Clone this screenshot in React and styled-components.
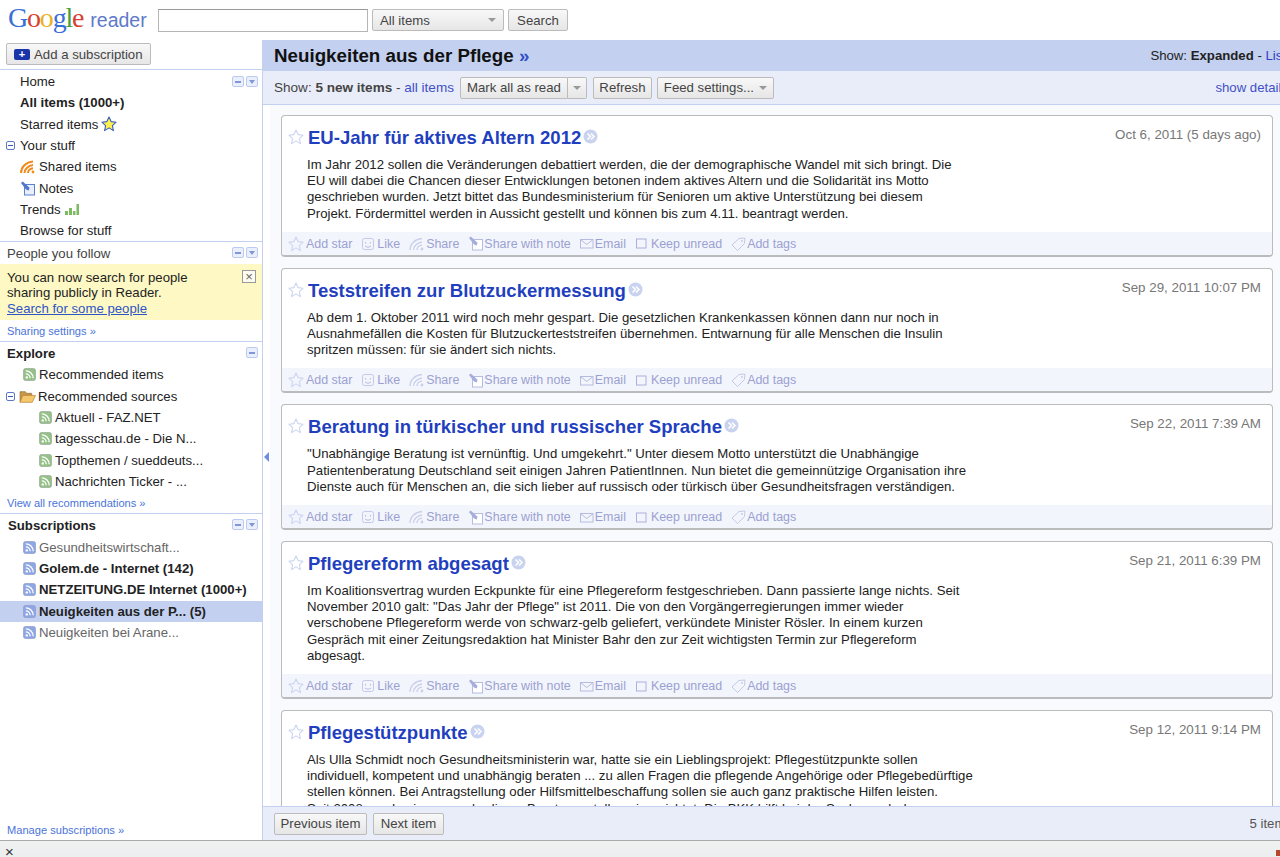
import React from 'react'
import styled, { createGlobalStyle } from 'styled-components'

const GlobalStyle = createGlobalStyle`
  html, body { margin: 0; padding: 0; height: 100%; overflow: hidden; background: #fff; }
  body { font-family: "Liberation Sans", Arial, sans-serif; font-size: 13.2px; color: #222; }
`

const Page = styled.div`
  width: 1280px;
  height: 857px;
  display: flex;
  flex-direction: column;
  overflow: hidden;
`

// top bar
const TopBar = styled.header`
  height: 40px;
  flex: none;
  display: flex;
  align-items: flex-start;
`
const Logo = styled.div`
  width: 150px;
  padding-left: 8px;
  margin-top: 2px;
  display: flex;
  align-items: baseline;
  gap: 7px;
  box-sizing: border-box;
  flex: none;
`
const LogoWord = styled.span`
  font-family: "Liberation Serif", serif;
  font-size: 28px;
  letter-spacing: -1.2px;
`
const LogoLetter = styled.span`
  color: ${p => p.$c};
`
const LogoReader = styled.span`
  font-size: 19.5px;
  color: #5d7ac9;
`
const SearchInput = styled.input`
  width: 210px;
  height: 23px;
  box-sizing: border-box;
  margin: 9px 4px 0 8px;
  border: 1px solid #b5b5b5;
  border-top-color: #999;
  background: #fff;
`
const Btn = styled.button`
  height: ${p => p.$h || 22}px;
  padding: 0 ${p => p.$pad ?? 7}px;
  box-sizing: border-box;
  border: 1px solid #bbb;
  border-radius: 2px;
  background: linear-gradient(#f8f8f8, #e6e6e6);
  color: #444;
  font: 13.2px "Liberation Sans", Arial, sans-serif;
  display: inline-flex;
  align-items: center;
  justify-content: ${p => p.$between ? 'space-between' : 'center'};
  width: ${p => p.$w ? p.$w + 'px' : 'auto'};
  flex: none;
`
const TopBtn = styled(Btn)`
  margin: 9px 4px 0 0;
`
const Caret = styled.span`
  width: 0;
  height: 0;
  border-left: 4px solid transparent;
  border-right: 4px solid transparent;
  border-top: 4px solid #999;
  margin-left: ${p => p.$gap || 0}px;
`

// body split
const Middle = styled.div`
  flex: 1;
  min-height: 0;
  display: flex;
`

// sidebar
const Sidebar = styled.nav`
  width: 263px;
  flex: none;
  box-sizing: border-box;
  border-right: 1px solid #c3d0ef;
  display: flex;
  flex-direction: column;
`
const AddArea = styled.div`
  height: 29px;
  flex: none;
  padding: 3px 0 0 6px;
  box-sizing: border-box;
`
const AddBtn = styled(Btn)`
  gap: 4px;
  width: 145px;
  padding: 0 0 0 7px;
  justify-content: flex-start;
`
const PlusBox = styled.span`
  width: 16px;
  height: 11px;
  background: #1a35a8;
  border-radius: 2px;
  color: #fff;
  font: bold 11px/11px "Liberation Sans", sans-serif;
  text-align: center;
`
const Section = styled.section`
  border-top: 1px solid #c3d0ef;
  flex: none;
`
const NavSection = styled(Section)`
  height: 172px;
  box-sizing: border-box;
  padding-top: 1px;
`
const Row = styled.div`
  height: ${p => p.$h || 21.4}px;
  display: flex;
  align-items: center;
  gap: ${p => p.$gap ?? 3}px;
  padding-left: ${p => p.$left}px;
  padding-right: 4px;
  white-space: nowrap;
  font-weight: ${p => p.$bold ? 'bold' : 'normal'};
  color: ${p => p.$muted ? '#666' : '#222'};
  background: ${p => p.$selected ? '#c3d0f0' : 'transparent'};
`
const SideHeading = styled.div`
  height: ${p => p.$h || 22}px;
  display: flex;
  align-items: center;
  padding: 0 4px 0 ${p => p.$left || 7}px;
  font-weight: ${p => p.$light ? 'normal' : 'bold'};
  color: ${p => p.$light ? '#444' : '#222'};
`
const Tools = styled.span`
  margin-left: auto;
  display: flex;
  gap: 2px;
  align-self: flex-start;
  padding-top: 5px;
`
const Tool = styled.span`
  width: 12px;
  height: 11px;
  box-sizing: border-box;
  border: 1px solid #bccaf0;
  border-radius: 2px;
  background: #e9effc;
  display: flex;
  align-items: center;
  justify-content: center;
`
const ToolDash = styled.span`
  width: 6px;
  height: 2px;
  background: #7f97d8;
`
const ToolArrow = styled.span`
  width: 0;
  height: 0;
  border-left: 3px solid transparent;
  border-right: 3px solid transparent;
  border-top: 4px solid #7f97d8;
`
const Expander = styled.span`
  width: 9px;
  height: 9px;
  box-sizing: border-box;
  border: 1px solid #5c79c4;
  border-radius: 2px;
  margin-right: 2px;
  display: flex;
  align-items: center;
  justify-content: center;
  flex: none;
  &::after {
    content: '';
    width: 5px;
    height: 1px;
    background: #3f5cab;
  }
`
const Notice = styled.div`
  height: 56px;
  box-sizing: border-box;
  background: #fdf8c4;
  padding: 6px 7px 0;
  line-height: 15.4px;
  position: relative;
`
const NoticeLink = styled.a`
  color: #2f55c4;
  text-decoration: underline;
`
const CloseBox = styled.span`
  position: absolute;
  top: 6px;
  right: 6px;
  width: 14px;
  height: 13px;
  box-sizing: border-box;
  border: 1px solid #999;
  background: #fdfcf0;
  color: #666;
  font: 13px/11px "Liberation Sans", sans-serif;
  text-align: center;
`
const SmallLink = styled.a`
  display: block;
  color: #4a74d8;
  font-size: 11.1px;
  box-sizing: border-box;
  height: ${p => p.$h || 21}px;
  padding: 1px 0 0 7px;
  line-height: 20px;
  flex: none;
`
const SideFoot = styled(SmallLink)`
  margin-top: auto;
`

// main column
const Main = styled.main`
  width: 1060px;
  flex: none;
  display: flex;
  flex-direction: column;
  min-height: 0;
`
const TitleBar = styled.div`
  height: 31px;
  flex: none;
  background: #c3d0f0;
  display: flex;
  align-items: center;
  padding: 0 37px 0 11px;
`
const FeedTitle = styled.h1`
  margin: 0;
  font-size: 18.75px;
  font-weight: bold;
  color: #111;
  span { color: #2f4fc4; }
`
const ViewSwitch = styled.div`
  margin-left: auto;
  color: #222;
  a { color: #2f3fc4; }
`
const SubBar = styled.div`
  height: 34px;
  flex: none;
  box-sizing: border-box;
  background: #e9edf9;
  border-bottom: 1px solid #c3d0ef;
  display: flex;
  align-items: center;
  padding: 0 35px 0 11px;
  color: #444;
  gap: 5px;
`
const ShowFilter = styled.span`
  font-size: 13.55px;
  white-space: nowrap;
`
const BarLink = styled.a`
  color: #3f50c8;
`
const Spacer = styled.span`
  margin-left: auto;
`
const SplitBtn = styled.div`
  display: flex;
  height: 22px;
  flex: none;
  margin: 0 1px;
`
const SplitMain = styled(Btn)`
  width: 108px;
  border-radius: 2px 0 0 2px;
  padding: 0;
`
const SplitSide = styled(Btn)`
  width: 19px;
  border-left: 0;
  border-radius: 0 2px 2px 0;
  padding: 0;
`
const Stage = styled.div`
  flex: 1;
  min-height: 0;
  display: flex;
`
const Gutter = styled.div`
  width: 7px;
  flex: none;
  display: flex;
  align-items: center;
  padding-top: 2px;
`
const GutterArrow = styled.span`
  width: 0;
  height: 0;
  border-top: 5px solid transparent;
  border-bottom: 5px solid transparent;
  border-right: 5px solid #6d8ee0;
  margin-left: 1px;
`
const Feed = styled.div`
  flex: 1;
  min-width: 0;
  overflow: hidden;
  background: #f9fafd;
  padding: 10px 50px 0 11px;
  display: flex;
  flex-direction: column;
  gap: 11px;
`
const Card = styled.article`
  flex: none;
  background: #fff;
  border: 1px solid #bbb;
  border-bottom-width: 2px;
  border-radius: 4px;
  box-sizing: border-box;
`
const CardHead = styled.div`
  height: 40px;
  box-sizing: border-box;
  display: flex;
  align-items: flex-start;
  padding: 12px 11px 0 6px;
`
const StarSlot = styled.span`
  margin-top: 1px;
`
const ItemTitle = styled.h2`
  margin: -1px 2px 0 4px;
  font-size: 18.55px;
  line-height: 21px;
  font-weight: bold;
  color: #1f3fbf;
`
const MoreSlot = styled.span`
  margin-top: 1px;
`
const ItemDate = styled.time`
  margin-left: auto;
  color: #777;
  font-size: 13.35px;
  line-height: 14px;
`
const ItemBody = styled.div`
  padding: 1px 0 10px 25px;
  line-height: 16.2px;
  color: #222;
`
const ActionBar = styled.div`
  height: 23px;
  box-sizing: border-box;
  padding: 1px 0 0 6px;
  background: #f3f5fc;
  display: flex;
  align-items: center;
  gap: 9px;
  border-radius: 0 0 4px 4px;
`
const Action = styled.span`
  display: flex;
  align-items: center;
  gap: ${p => p.$gap ?? 1}px;
  margin-left: ${p => p.$shift || 0}px;
  color: #9aa1d2;
  font-size: 12.45px;
`
const Footer = styled.div`
  height: 34px;
  flex: none;
  box-sizing: border-box;
  background: #e9edf9;
  border-top: 1px solid #c3d0ef;
  display: flex;
  align-items: center;
  gap: 6px;
  padding: 0 31px 0 11px;
  color: #555;
`
const BottomBar = styled.div`
  height: 17px;
  flex: none;
  box-sizing: border-box;
  border-top: 1px solid #aaa;
  background: linear-gradient(#f0f1f1, #ecefef);
  display: flex;
  align-items: center;
  justify-content: space-between;
  padding: 0 0 0 5px;
  color: #333;
  font-size: 15px;
`
const CloseMark = styled.span`
  margin-top: 5px;
  line-height: 12px;
`
const ResizeMark = styled.span`
  width: 4px;
  height: 6px;
  margin-top: 8px;
  background: #b8472c;
`

// icons
const Glyph = styled.svg`
  flex: none;
  display: block;
`
const Icon = ({ w = 14, h = 14, children }) => (
  <Glyph width={w} height={h} viewBox={`0 0 ${w} ${h}`}>{children}</Glyph>
)
const StarIcon = ({ size = 16, fill = 'none', stroke = '#ccd5f0' }) => (
  <Glyph width={size} height={size} viewBox="0 0 16 16">
    <path d="M8 1l2.100 4.600 5 .6-3.700 3.400 1 5L8 11.900 3.600 14.600l1-5L.9 6.200l5-.6z" fill={fill} stroke={stroke} strokeWidth="1.100" strokeLinejoin="round" />
  </Glyph>
)
const FeedIcon = ({ color = '#94c286', edge = '#9aa89a' }) => (
  <Icon w={13} h={13}>
    <rect x="0.500" y="0.500" width="12" height="12" rx="2" fill={color} stroke={edge} strokeWidth="0.700" />
    <path d="M2.800 2.800c4 0 7.400 3.300 7.400 7.400M2.800 5.800c2.500 0 4.400 2 4.400 4.400" fill="none" stroke="#fff" strokeWidth="1.300" />
    <circle cx="3.800" cy="9.400" r="1.200" fill="#fff" />
  </Icon>
)
const ShareIcon = ({ color = '#f08a1d', width = 2 }) => (
  <Icon w={16} h={14}>
    <path d="M1 13C1 7 6 2 13 1.500M4.500 13c0-4 4-7.500 8.500-8M8 13c0-2.500 2.200-4.500 5-4.800" fill="none" stroke={color} strokeWidth={width} />
    <circle cx="13" cy="12" r="1.400" fill={color} />
  </Icon>
)
const NoteIcon = ({ box = '#5b7fd4', pen = '#4f75cc', bg = '#e8effc' }) => (
  <Icon w={16} h={15}>
    <rect x="4.500" y="3.500" width="10" height="10.500" fill={bg} stroke={box} />
    <path d="M1 2l1.800-1.500 6.700 6.200-.7 2.800-2.800-.9z" fill={pen} />
  </Icon>
)
const TrendsIcon = () => (
  <Icon w={16} h={12}>
    <path d="M1 8h3v4H1zM5 5h3v7H5zM9 8h2.500v4H9zM12.500 1H15v11h-2.500z" fill="#7dbb62" />
  </Icon>
)
const FolderIcon = () => (
  <Glyph width="17" height="15" viewBox="0 0 16 14">
    <path d="M1 2.500h5l1 1.500h5v2H4L1 12z" fill="#c9974a" stroke="#9b7434" strokeWidth="0.700" />
    <path d="M3.500 6H15.500l-3 6.500H1z" fill="#f6c66a" stroke="#b98a3f" strokeWidth="0.700" />
  </Glyph>
)
const LikeIcon = () => (
  <Icon w={14} h={14}>
    <rect x="1.500" y="1.500" width="11" height="11" rx="2" fill="none" stroke="#c3c9e6" />
    <path d="M4.500 5v1.500M9.500 5v1.500M4 9c2 1.500 4 1.500 6 0" fill="none" stroke="#b5bce0" />
  </Icon>
)
const MailIcon = () => (
  <Icon w={14} h={11}>
    <rect x="0.500" y="1.500" width="12.500" height="8.500" fill="none" stroke="#b5bce0" />
    <path d="M1 2l5.700 4.500L12.500 2" fill="none" stroke="#b5bce0" />
  </Icon>
)
const BoxIcon = () => (
  <Icon w={11} h={11}>
    <rect x="0.500" y="1" width="9.500" height="9" fill="none" stroke="#aab1da" />
  </Icon>
)
const TagIcon = () => (
  <Icon w={15} h={14}>
    <path d="M1 8l7-6.500 6-.5-.5 5.500L6.500 13.500z" fill="none" stroke="#c3c9e6" />
    <circle cx="11" cy="4" r="0.900" fill="#c3c9e6" />
  </Icon>
)
const MoreIcon = () => (
  <Glyph width="15" height="15" viewBox="0 0 15 15">
    <circle cx="7.500" cy="7.500" r="7" fill="#c9d3f0" />
    <path d="M4.500 4.500l3 3-3 3M8 4.500l3 3-3 3" fill="none" stroke="#fff" strokeWidth="1.500" />
  </Glyph>
)

const SideTools = ({ arrow = true }) => (
  <Tools>
    <Tool><ToolDash /></Tool>
    {arrow && <Tool><ToolArrow /></Tool>}
  </Tools>
)

const items = [
  {
    title: 'EU-Jahr für aktives Altern 2012',
    date: 'Oct 6, 2011 (5 days ago)',
    lines: [
      'Im Jahr 2012 sollen die Veränderungen debattiert werden, die der demographische Wandel mit sich bringt. Die',
      'EU will dabei die Chancen dieser Entwicklungen betonen indem aktives Altern und die Solidarität ins Motto',
      'geschrieben wurden. Jetzt bittet das Bundesministerium für Senioren um aktive Unterstützung bei diesem',
      'Projekt. Fördermittel werden in Aussicht gestellt und können bis zum 4.11. beantragt werden.',
    ],
  },
  {
    title: 'Teststreifen zur Blutzuckermessung',
    date: 'Sep 29, 2011 10:07 PM',
    lines: [
      'Ab dem 1. Oktober 2011 wird noch mehr gespart. Die gesetzlichen Krankenkassen können dann nur noch in',
      'Ausnahmefällen die Kosten für Blutzuckerteststreifen übernehmen. Entwarnung für alle Menschen die Insulin',
      'spritzen müssen: für sie ändert sich nichts.',
    ],
  },
  {
    title: 'Beratung in türkischer und russischer Sprache',
    date: 'Sep 22, 2011 7:39 AM',
    lines: [
      '"Unabhängige Beratung ist vernünftig. Und umgekehrt." Unter diesem Motto unterstützt die Unabhängige',
      'Patientenberatung Deutschland seit einigen Jahren PatientInnen. Nun bietet die gemeinnützige Organisation ihre',
      'Dienste auch für Menschen an, die sich lieber auf russisch oder türkisch über Gesundheitsfragen verständigen.',
    ],
  },
  {
    title: 'Pflegereform abgesagt',
    date: 'Sep 21, 2011 6:39 PM',
    lines: [
      'Im Koalitionsvertrag wurden Eckpunkte für eine Pflegereform festgeschrieben. Dann passierte lange nichts. Seit',
      'November 2010 galt: "Das Jahr der Pflege" ist 2011. Die von den Vorgängerregierungen immer wieder',
      'verschobene Pflegereform werde von schwarz-gelb geliefert, verkündete Minister Rösler. In einem kurzen',
      'Gespräch mit einer Zeitungsredaktion hat Minister Bahr den zur Zeit wichtigsten Termin zur Pflegereform',
      'abgesagt.',
    ],
  },
  {
    title: 'Pflegestützpunkte',
    date: 'Sep 12, 2011 9:14 PM',
    lines: [
      'Als Ulla Schmidt noch Gesundheitsministerin war, hatte sie ein Lieblingsprojekt: Pflegestützpunkte sollen',
      'individuell, kompetent und unabhängig beraten ... zu allen Fragen die pflegende Angehörige oder Pflegebedürftige',
      'stellen können. Bei Antragstellung oder Hilfsmittelbeschaffung sollen sie auch ganz praktische Hilfen leisten.',
      'Seit 2008 werden immer mehr dieser Beratungsstellen eingerichtet. Die BKK hilft bei der Suche nach dem',
    ],
  },
]

const recommended = ['Aktuell - FAZ.NET', 'tagesschau.de - Die N...', 'Topthemen / sueddeuts...', 'Nachrichten Ticker - ...']
const subscriptions = [
  { name: 'Gesundheitswirtschaft...', muted: true },
  { name: 'Golem.de - Internet (142)', bold: true },
  { name: 'NETZEITUNG.DE Internet (1000+)', bold: true },
  { name: 'Neuigkeiten aus der P... (5)', bold: true, selected: true },
  { name: 'Neuigkeiten bei Arane...', muted: true },
]

const ItemCard = ({ item, last }) => (
  <Card>
    <CardHead>
      <StarSlot><StarIcon /></StarSlot>
      <ItemTitle>{item.title}</ItemTitle>
      <MoreSlot><MoreIcon /></MoreSlot>
      <ItemDate>{item.date}</ItemDate>
    </CardHead>
    <ItemBody>
      {item.lines.map(l => <div key={l}>{l}</div>)}
    </ItemBody>
    {!last && (
      <ActionBar>
        <Action $gap={2}><StarIcon />Add star</Action>
        <Action $gap={2}><LikeIcon />Like</Action>
        <Action><ShareIcon color="#c9cfe9" width={1.3} />Share</Action>
        <Action $gap={0}><NoteIcon box="#b5bce0" pen="#a5addb" bg="#fff" />Share with note</Action>
        <Action><MailIcon />Email</Action>
        <Action $gap={4} $shift={1}><BoxIcon />Keep unread</Action>
        <Action><TagIcon />Add tags</Action>
      </ActionBar>
    )}
  </Card>
)

export default function App() {
  return (
    <Page>
      <GlobalStyle />
      <TopBar>
        <Logo>
          <LogoWord>
            <LogoLetter $c="#3a6fd8">G</LogoLetter>
            <LogoLetter $c="#d8402f">o</LogoLetter>
            <LogoLetter $c="#e8b21f">o</LogoLetter>
            <LogoLetter $c="#3a6fd8">g</LogoLetter>
            <LogoLetter $c="#4a9e3f">l</LogoLetter>
            <LogoLetter $c="#d8402f">e</LogoLetter>
          </LogoWord>
          <LogoReader>reader</LogoReader>
        </Logo>
        <SearchInput />
        <TopBtn $w={132} $between>All items<Caret /></TopBtn>
        <TopBtn $w={60} $pad={0}>Search</TopBtn>
      </TopBar>
      <Middle>
        <Sidebar>
          <AddArea>
            <AddBtn><PlusBox>+</PlusBox>Add a subscription</AddBtn>
          </AddArea>
          <NavSection>
            <Row $left={20} $h={21.3}>Home<SideTools /></Row>
            <Row $left={20} $h={21.3} $bold>All items (1000+)</Row>
            <Row $left={20} $h={21.3}>Starred items <StarIcon size={16} fill="#fdf050" stroke="#3a5fc0" /></Row>
            <Row $left={6} $h={21.3}><Expander />Your stuff</Row>
            <Row $left={20} $h={21.3}><ShareIcon />Shared items</Row>
            <Row $left={20} $h={21.3}><NoteIcon />Notes</Row>
            <Row $left={20} $h={21.3}>Trends <TrendsIcon /></Row>
            <Row $left={20} $h={21.3}>Browse for stuff</Row>
          </NavSection>
          <Section>
            <SideHeading $light>People you follow<SideTools /></SideHeading>
            <Notice>
              You can now search for people<br />
              sharing publicly in Reader.<br />
              <NoticeLink>Search for some people</NoticeLink>
              <CloseBox>×</CloseBox>
            </Notice>
            <SmallLink>Sharing settings »</SmallLink>
          </Section>
          <Section>
            <SideHeading $h={22}>Explore<SideTools arrow={false} /></SideHeading>
            <Row $left={23}><FeedIcon />Recommended items</Row>
            <Row $left={6} $gap={2}><Expander /><FolderIcon />Recommended sources</Row>
            {recommended.map(name => (
              <Row key={name} $left={39}><FeedIcon />{name}</Row>
            ))}
            <SmallLink>View all recommendations »</SmallLink>
          </Section>
          <Section>
            <SideHeading $left={8}>Subscriptions<SideTools /></SideHeading>
            {subscriptions.map(s => (
              <Row key={s.name} $left={23} $bold={s.bold} $muted={s.muted} $selected={s.selected}>
                <FeedIcon color="#8ea6e4" edge="#8f9cc4" />{s.name}
              </Row>
            ))}
          </Section>
          <SideFoot>Manage subscriptions »</SideFoot>
        </Sidebar>
        <Main>
          <TitleBar>
            <FeedTitle>Neuigkeiten aus der Pflege <span>»</span></FeedTitle>
            <ViewSwitch>Show: <b>Expanded</b> - <a>List</a></ViewSwitch>
          </TitleBar>
          <SubBar>
            <ShowFilter>Show: <b>5 new items</b> - <BarLink>all items</BarLink></ShowFilter>
            <SplitBtn>
              <SplitMain>Mark all as read</SplitMain>
              <SplitSide><Caret /></SplitSide>
            </SplitBtn>
            <Btn $w={59} $pad={0}>Refresh</Btn>
            <Btn $w={117} $pad={0}>Feed settings...<Caret $gap={5} /></Btn>
            <Spacer />
            <BarLink>show details</BarLink>
          </SubBar>
          <Stage>
            <Gutter><GutterArrow /></Gutter>
            <Feed>
              {items.map((item, i) => <ItemCard key={item.title} item={item} last={i === items.length - 1} />)}
            </Feed>
          </Stage>
          <Footer>
            <Btn $w={93} $pad={0}>Previous item</Btn>
            <Btn $w={71} $pad={0}>Next item</Btn>
            <Spacer />
            5 items
          </Footer>
        </Main>
      </Middle>
      <BottomBar>
        <CloseMark>×</CloseMark>
        <ResizeMark />
      </BottomBar>
    </Page>
  )
}
